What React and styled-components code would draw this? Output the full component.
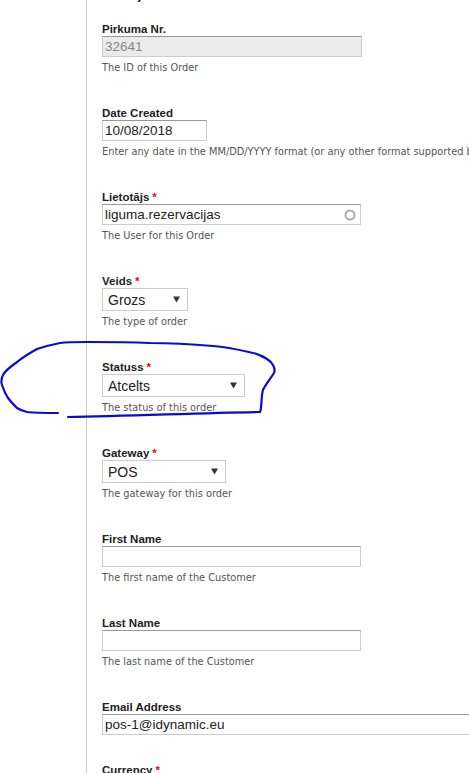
import styled, { createGlobalStyle } from "styled-components";

const GlobalStyle = createGlobalStyle`
  html, body {
    margin: 0;
    padding: 0;
    background: #fff;
    overflow: hidden;
  }
`;

const Page = styled.div`
  position: relative;
  display: flex;
  width: 469px;
  height: 773px;
  overflow: hidden;
`;

const Gutter = styled.div`
  width: 86px;
  flex-shrink: 0;
`;

const Fieldset = styled.div`
  flex: 1;
  border-left: 1px solid #cccccc;
  padding-left: 15px;
  display: flex;
  flex-direction: column;
`;

const Legend = styled.div`
  font-family: "Liberation Sans", Arial, sans-serif;
  font-weight: bold;
  font-size: 12px;
  line-height: 14px;
  color: #222;
  margin-top: -12px;
  margin-bottom: 20px;
`;

const Group = styled.div`
  display: flex;
  flex-direction: column;
  align-items: flex-start;
  margin-bottom: 28px;
`;

const Label = styled.label`
  font-family: "Liberation Sans", Arial, sans-serif;
  font-weight: bold;
  font-size: 11.5px;
  line-height: 14px;
  color: #222;
  white-space: nowrap;
`;

const Star = styled.span`
  color: #e00;
  margin-left: 3px;
`;

const Field = styled.div`
  box-sizing: border-box;
  display: flex;
  align-items: center;
  justify-content: space-between;
  width: ${(p) => p.$w}px;
  height: ${(p) => (p.$select ? 23 : 21)}px;
  padding: 0 ${(p) => (p.$select ? 7 : 4)}px 0 ${(p) => (p.$select ? 5 : 2)}px;
  border: 1px solid #cccccc;
  border-top-color: ${(p) => (p.$select ? "#cccccc" : "#999999")};
  background: ${(p) => (p.$disabled ? "#ebebeb" : "#fff")};
  font-family: "Liberation Sans", Arial, sans-serif;
  font-size: ${(p) => (p.$select ? 14 : 13.5)}px;
  color: ${(p) => (p.$disabled ? "#888" : "#222")};
  white-space: nowrap;
  flex-shrink: 0;
`;

const Desc = styled.div`
  font-family: "DejaVu Sans", Verdana, sans-serif;
  font-size: 9.8px;
  line-height: 12px;
  color: #555;
  margin: 5px 0 4px;
  white-space: nowrap;
`;

const Arrow = () => (
  <svg width="7" height="7" viewBox="0 0 7 7">
    <path d="M0 0.5 L7 0.5 L3.5 6.5 Z" fill="#333" />
  </svg>
);

const Throbber = () => (
  <svg width="12" height="12" viewBox="0 0 12 12">
    <circle cx="6" cy="6" r="4.5" fill="none" stroke="#aaa" strokeWidth="2" />
  </svg>
);

const Scribble = styled.svg`
  position: absolute;
  left: 0;
  top: 0;
  pointer-events: none;
`;

const fields = [
  { label: "Pirkuma Nr.", value: "32641", w: 260, disabled: true, desc: "The ID of this Order" },
  {
    label: "Date Created",
    value: "10/08/2018",
    w: 105,
    desc: "Enter any date in the MM/DD/YYYY format (or any other format supported by strtotime)",
  },
  { label: "Lietotājs", req: true, value: "liguma.rezervacijas", w: 259, auto: true, desc: "The User for this Order" },
  { label: "Veids", req: true, value: "Grozs", w: 86, select: true, desc: "The type of order" },
  { label: "Statuss", req: true, value: "Atcelts", w: 143, select: true, desc: "The status of this order" },
  { label: "Gateway", req: true, value: "POS", w: 124, select: true, desc: "The gateway for this order" },
  { label: "First Name", value: "", w: 259, desc: "The first name of the Customer" },
  { label: "Last Name", value: "", w: 259, desc: "The last name of the Customer" },
  { label: "Email Address", value: "pos-1@idynamic.eu", w: 420 },
  { label: "Currency", req: true, value: "EUR", w: 86, select: true },
];

export default function App() {
  return (
    <>
      <GlobalStyle />
      <Page>
        <Gutter />
        <Fieldset>
          <Legend>Pasūtījums</Legend>
          {fields.map((f) => (
            <Group key={f.label}>
              <Label>
                {f.label}
                {f.req && <Star>*</Star>}
              </Label>
              <Field $w={f.w} $select={f.select} $disabled={f.disabled}>
                <span>{f.value}</span>
                {f.select && <Arrow />}
                {f.auto && <Throbber />}
              </Field>
              {f.desc && <Desc>{f.desc}</Desc>}
            </Group>
          ))}
        </Fieldset>
        <Scribble width="469" height="773" viewBox="0 0 469 773">
          <path
            d="M68 417 C 130 416, 200 413, 260 412 C 262 408, 261 396, 263 390 C 265 385, 271 378, 274 373 C 276 368, 272 362, 267 359 C 262 356, 258 354, 253 353 C 240 350, 228 347, 213 346 C 190 344, 170 343, 150 343 C 125 342, 105 342, 87 342 C 78 342, 68 342, 60 343 C 50 345, 43 347, 37 349 C 28 354, 22 358, 17 362 C 10 367, 5 371, 3 375 C 1 379, 1 382, 2 385 C 4 391, 6 395, 8 398 C 11 402, 14 405, 17 408 C 20 410, 23 411, 27 412 C 37 413, 48 413, 58 413"
            fill="none"
            stroke="#0a0ad2"
            strokeWidth="2.2"
            strokeLinecap="round"
            strokeLinejoin="round"
          />
        </Scribble>
      </Page>
    </>
  );
}
